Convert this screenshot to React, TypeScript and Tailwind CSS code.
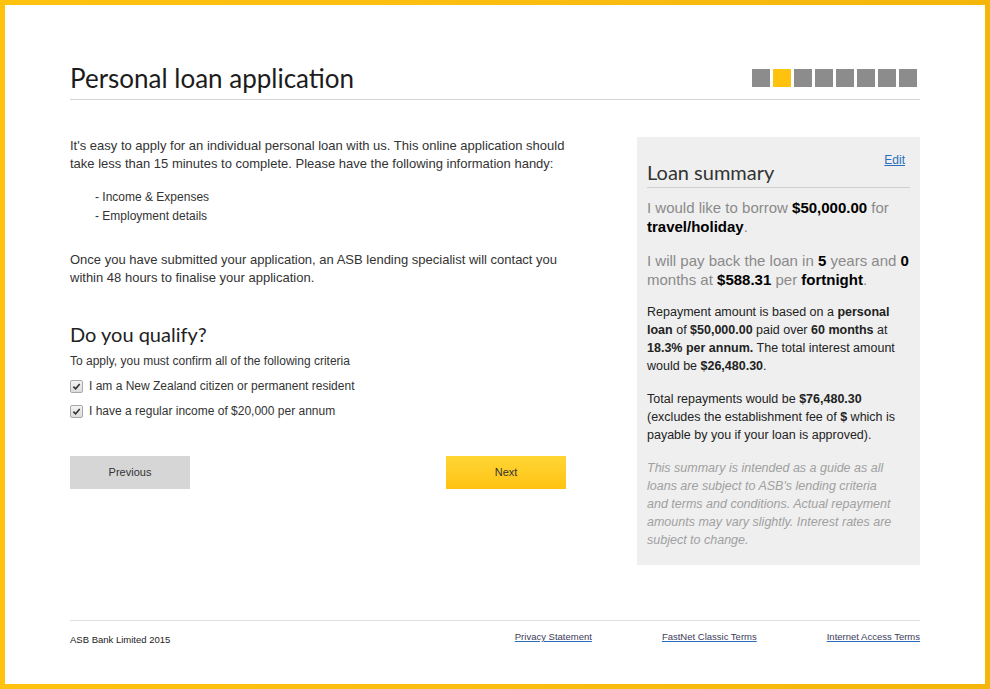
const steps = [false, true, false, false, false, false, false, false]

function Check() {
  return (
    <span className="flex h-[13px] w-[13px] shrink-0 items-center justify-center rounded-[2px] border border-[#a8a8a8] bg-gradient-to-b from-[#f4f4f4] to-[#dcdcdc]">
      <svg viewBox="0 0 10 10" className="h-[9px] w-[9px]">
        <path d="M1.5 5.2 L4 7.6 L8.6 2.2" fill="none" stroke="#333" strokeWidth={1.8} />
      </svg>
    </span>
  )
}

export default function App() {
  return (
    <div className="h-[689px] w-[990px] bg-gradient-to-r from-[#ffc20e] via-[#fbbd10] to-[#f5b60c] p-[5px]">
      <div className="h-full w-full bg-white">
        <div className="ml-[65px] w-[850px] pt-[57px] font-['Liberation_Sans',Arial,sans-serif] text-[#333]">
          {/* Header */}
          <div className="flex h-[38px] items-start justify-between border-b border-[#d4d4d4]">
            <h1 className="-mt-[2px] font-['Lato',sans-serif] text-[26px] leading-[36px] text-[#1c1c1c]">
              Personal loan application
            </h1>
            <div className="mr-[3px] mt-[7px] flex gap-[3px]">
              {steps.map((active, i) => (
                <div key={i} className={active ? 'h-[18px] w-[18px] bg-[#ffc20e]' : 'h-[18px] w-[18px] bg-[#8c8c8c]'} />
              ))}
            </div>
          </div>

          {/* Main */}
          <div className="mt-[37px] flex justify-between">
            {/* Left column */}
            <div className="w-[496px]">
              <p className="text-[13px] leading-[18px]">
                It's easy to apply for an individual personal loan with us. This online application should take less than 15 minutes to complete. Please have the following information handy:
              </p>
              <ul className="mt-[15px] pl-[25px] text-[12px] leading-[19px]">
                <li>- Income &amp; Expenses</li>
                <li>- Employment details</li>
              </ul>
              <p className="mt-[25px] text-[13px] leading-[18px]">
                Once you have submitted your application, an ASB lending specialist will contact you within 48 hours to finalise your application.
              </p>

              <h2 className="mt-[35px] font-['Lato',sans-serif] text-[20px] leading-[24px] text-[#222]">Do you qualify?</h2>
              <p className="mt-[7px] text-[12px] leading-[16px]">To apply, you must confirm all of the following criteria</p>
              <div className="mt-[9px] space-y-[9px] text-[12px] leading-[16px]">
                <label className="flex items-center gap-[6px]">
                  <Check />
                  <span>I am a New Zealand citizen or permanent resident</span>
                </label>
                <label className="flex items-center gap-[6px]">
                  <Check />
                  <span>I have a regular income of $20,000 per annum</span>
                </label>
              </div>

              <div className="mt-[37px] flex justify-between">
                <button className="h-[33px] w-[120px] bg-[#d6d6d6] text-[11px] text-[#333]">Previous</button>
                <button className="h-[33px] w-[120px] bg-gradient-to-b from-[#ffd633] to-[#ffc20e] text-[11px] text-[#333]">Next</button>
              </div>
            </div>

            {/* Loan summary */}
            <div className="w-[283px] bg-[#efefef] px-[10px] pb-[16px] pt-[15px]">
              <div className="flex items-start justify-between border-b border-[#cfcfcf] pb-[3px]">
                <h3 className="mt-[8px] font-['Lato',sans-serif] text-[20px] leading-[24px] text-[#333]">Loan summary</h3>
                <a href="#" className="mr-[5px] text-[12px] leading-[16px] text-[#2a6ebb] underline">Edit</a>
              </div>
              <p className="mt-[10px] text-[15px] leading-[19px] text-[#8a8a8a]">
                I would like to borrow <b className="text-black">$50,000.00</b> for <b className="text-black">travel/holiday</b>.
              </p>
              <p className="mt-[15px] text-[15px] leading-[19px] text-[#8a8a8a]">
                I will pay back the loan in <b className="text-black">5</b> years and <b className="text-black">0</b> months at <b className="text-black">$588.31</b> per <b className="text-black">fortnight</b>.
              </p>
              <p className="mt-[14px] text-[12.5px] leading-[18px] text-[#222]">
                Repayment amount is based on a <b>personal loan</b> of <b>$50,000.00</b> paid over <b>60 months</b> at <b>18.3% per annum.</b> The total interest amount would be <b>$26,480.30</b>.
              </p>
              <p className="mt-[15px] text-[12.5px] leading-[18px] text-[#222]">
                Total repayments would be <b>$76,480.30</b> (excludes the establishment fee of <b>$</b> which is payable by you if your loan is approved).
              </p>
              <p className="mt-[15px] pr-[14px] text-[12.5px] italic leading-[18px] text-[#a0a0a0]">
                This summary is intended as a guide as all loans are subject to ASB's lending criteria and terms and conditions. Actual repayment amounts may vary slightly. Interest rates are subject to change.
              </p>
            </div>
          </div>

          {/* Footer */}
          <div className="mt-[55px] flex justify-between border-t border-[#e0e0e0]">
            <span className="pt-[13px] text-[9.5px] leading-[12px] text-[#222]">ASB Bank Limited 2015</span>
            <div className="flex gap-[70px] pt-[10px] text-[9.5px] leading-[12px]">
              <a href="#" className="text-[#3c3c5a] underline decoration-[#2a6ebb]">Privacy Statement</a>
              <a href="#" className="text-[#3c3c5a] underline decoration-[#2a6ebb]">FastNet Classic Terms</a>
              <a href="#" className="text-[#3c3c5a] underline decoration-[#2a6ebb]">Internet Access Terms</a>
            </div>
          </div>
        </div>
      </div>
    </div>
  )
}
